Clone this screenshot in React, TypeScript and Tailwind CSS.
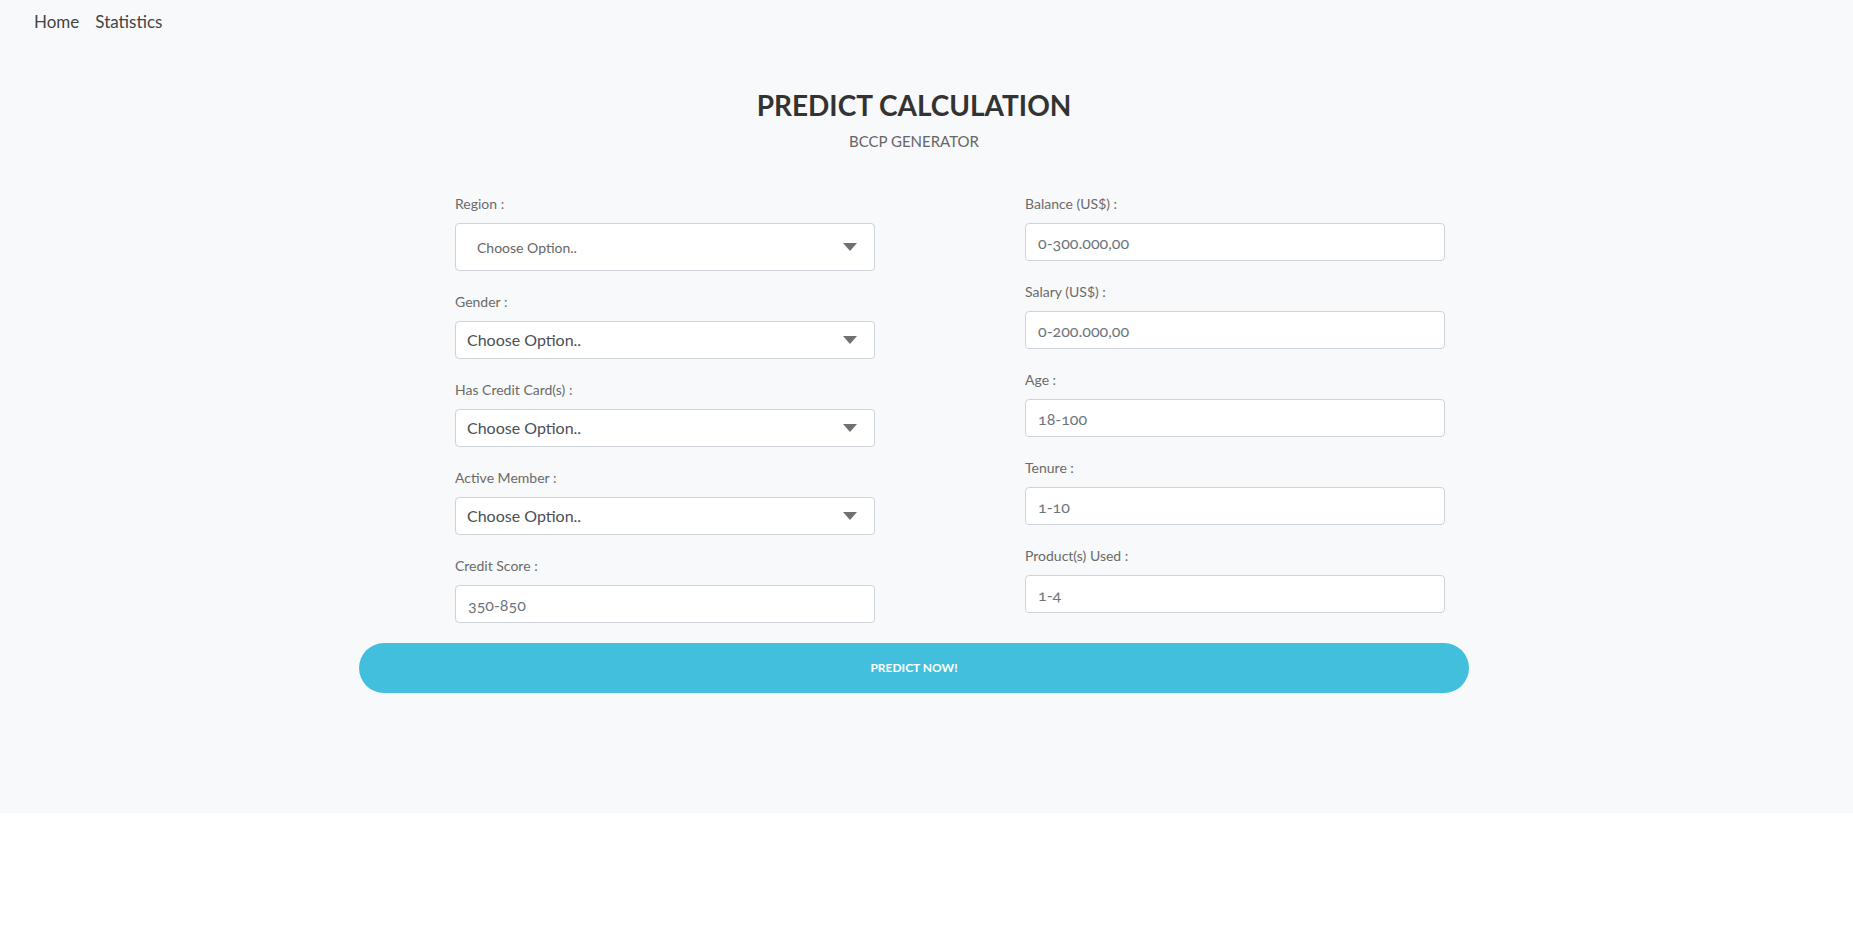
const selects = [
  { label: 'Region :', small: true },
  { label: 'Gender :' },
  { label: 'Has Credit Card(s) :' },
  { label: 'Active Member :' },
]
const leftInputs = [{ label: 'Credit Score :', ph: '350-850' }]
const rightInputs = [
  { label: 'Balance (US$) :', ph: '0-300.000,00' },
  { label: 'Salary (US$) :', ph: '0-200.000,00' },
  { label: 'Age :', ph: '18-100' },
  { label: 'Tenure :', ph: '1-10' },
  { label: "Product(s) Used :", ph: '1-4' },
]

function Label({ text }: { text: string }) {
  return <label className="block text-[14px] leading-[21px] mb-[9px] text-[#6b6b6b]">{text}</label>
}

function Arrow() {
  return (
    <svg width="14" height="8" viewBox="0 0 14 8" className="shrink-0">
      <path d="M0 0 H14 L7 8 Z" fill="#707070" />
    </svg>
  )
}

function SelectField({ label, small }: { label: string; small?: boolean }) {
  return (
    <div>
      <Label text={label} />
      {small ? (
        <div className="h-[48px] flex items-center justify-between bg-white border border-[#ced4da] rounded-[4px] pl-[21px] pr-[17px]">
          <span className="text-[14px] text-[#666]">Choose Option..</span>
          <Arrow />
        </div>
      ) : (
        <div className="h-[38px] flex items-center justify-between bg-white border border-[#ced4da] rounded-[4px] pl-[11px] pr-[17px]">
          <span className="text-[16px] text-[#495057]">Choose Option..</span>
          <Arrow />
        </div>
      )}
    </div>
  )
}

function InputField({ label, ph }: { label: string; ph: string }) {
  return (
    <div>
      <Label text={label} />
      <input
        placeholder={ph}
        className="block w-full h-[38px] bg-white border border-[#ced4da] rounded-[4px] px-[12px] text-[16px] oldstyle-nums text-[#495057] placeholder:text-[#6c757d] outline-none"
        style={{ fontFamily: 'inherit' }}
      />
    </div>
  )
}

export default function App() {
  return (
    <div className="min-h-[934px] bg-white" style={{ fontFamily: 'Lato, "Open Sans", sans-serif' }}>
      <div className="bg-[#f8f9fa] pb-[120px]">
        <nav className="flex gap-[16px] px-[34px] pt-[10px] pb-[6px] text-[17px] leading-[24px] text-[#444]">
          <a>Home</a>
          <a>Statistics</a>
        </nav>
        <div className="w-[1110px] ml-[359px]">
          <h1 className="mt-[48px] text-center text-[28px] leading-[34px] font-bold text-[#333]">PREDICT CALCULATION</h1>
          <p className="mt-[9px] text-center text-[15px] leading-[20px] text-[#666]">BCCP GENERATOR</p>
          <div className="mt-[42px] ml-[96px] grid grid-cols-[420px_420px] gap-x-[150px] items-start">
            <div className="flex flex-col gap-[20px]">
              {selects.map(s => <SelectField key={s.label} label={s.label} small={s.small} />)}
              {leftInputs.map(f => <InputField key={f.label} label={f.label} ph={f.ph} />)}
            </div>
            <div className="flex flex-col gap-[20px]">
              {rightInputs.map(f => <InputField key={f.label} label={f.label} ph={f.ph} />)}
            </div>
          </div>
          <button className="mt-[20px] w-full h-[50px] rounded-full bg-[#41bfdc] text-white text-[12px] font-bold">PREDICT NOW!</button>
        </div>
      </div>
    </div>
  )
}
